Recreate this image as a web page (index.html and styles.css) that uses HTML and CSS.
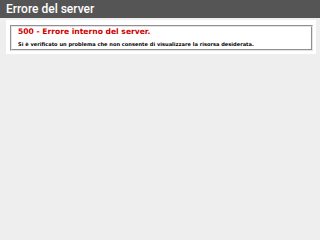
FILE: index.html
```html
<!DOCTYPE html>
<html>
<head>
  <meta charset="utf-8">
  <title>Errore di runtime</title>
  <link rel="stylesheet" href="styles.css">
</head>
<body>
  <div id="header"><h1>Errore del server</h1></div>
  <div id="content">
    <div class="content-container">
      <fieldset>
        <h2>500 - Errore interno del server.</h2>
        <h3>Si è verificato un problema che non consente di visualizzare la risorsa desiderata.</h3>
      </fieldset>
    </div>
  </div>
</body>
</html>
```

FILE: styles.css
```css
body {
  margin: 0;
  font-size: 7px;
  font-family: "DejaVu Sans", Verdana, sans-serif;
  background: #eeeeee;
}

fieldset {
  margin: 0;
  padding: 0 6px;
  height: 22px;
  border: 2px groove #e4e4e4;
}

h1 {
  font-size: 12px;
  font-weight: 500;
  line-height: 18px;
  margin: 0;
  color: #fff;
}

h2 {
  font-size: 7.6px;
  line-height: 10px;
  margin: 0;
  color: #cc0000;
}

h3 {
  font-size: 5.1px;
  line-height: 8px;
  margin: 3px 0 0 0;
  color: #000;
}

#header {
  padding: 0 6px;
  height: 18px;
  font-family: Roboto, "Liberation Sans", sans-serif;
  color: #fff;
  background-color: #555555;
}

#content {
  margin: 0 4px 0 6px;
}

.content-container {
  background: #fff;
  margin-top: 2px;
  padding: 5px 3px 3px 4px;
}
```
